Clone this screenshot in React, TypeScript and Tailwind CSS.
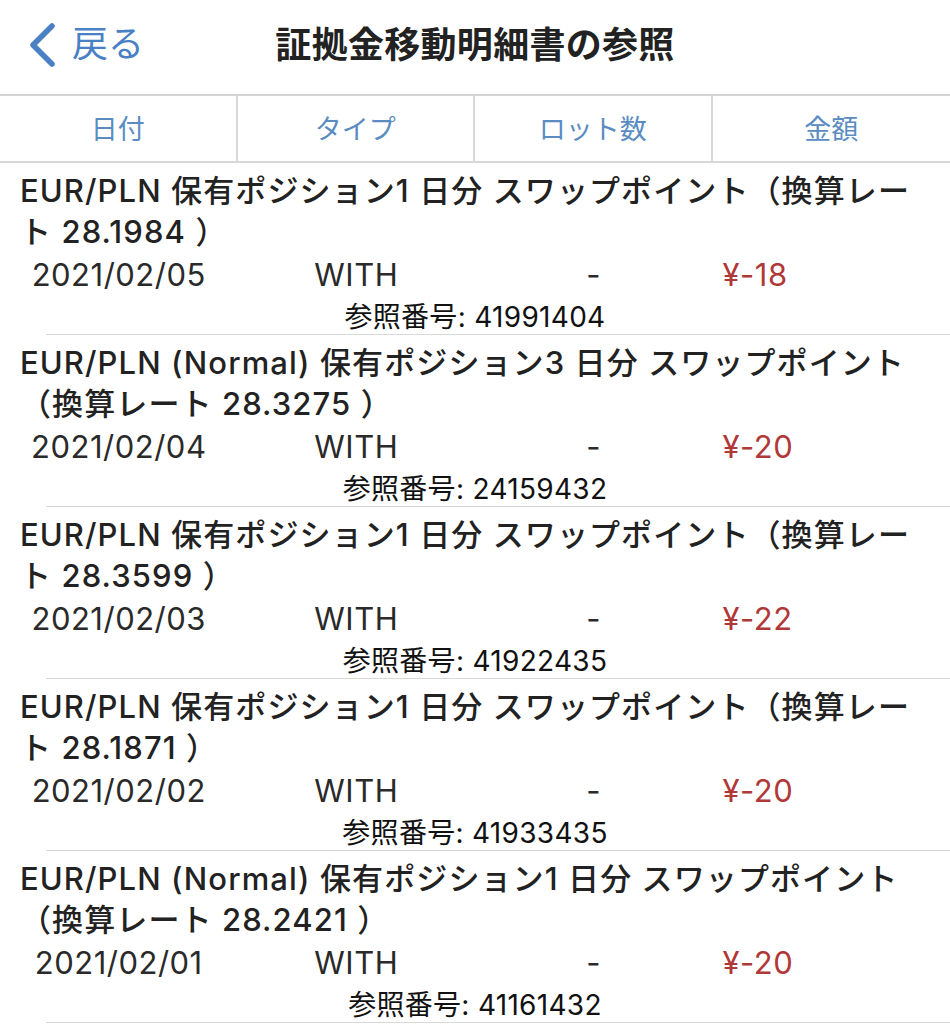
import React from "react";

const FONT = {
  fontFamily: '"Inter", "Noto Sans CJK JP", sans-serif',
};

type Row = { l1: string; l2: string; date: string; amt: string; ref: string };

const rows: Row[] = [
  {
    l1: "EUR/PLN 保有ポジション1 日分 スワップポイント（換算レー",
    l2: "ト 28.1984 ）",
    date: "2021/02/05",
    amt: "¥-18",
    ref: "41991404",
  },
  {
    l1: "EUR/PLN (Normal) 保有ポジション3 日分 スワップポイント",
    l2: "（換算レート 28.3275 ）",
    date: "2021/02/04",
    amt: "¥-20",
    ref: "24159432",
  },
  {
    l1: "EUR/PLN 保有ポジション1 日分 スワップポイント（換算レー",
    l2: "ト 28.3599 ）",
    date: "2021/02/03",
    amt: "¥-22",
    ref: "41922435",
  },
  {
    l1: "EUR/PLN 保有ポジション1 日分 スワップポイント（換算レー",
    l2: "ト 28.1871 ）",
    date: "2021/02/02",
    amt: "¥-20",
    ref: "41933435",
  },
  {
    l1: "EUR/PLN (Normal) 保有ポジション1 日分 スワップポイント",
    l2: "（換算レート 28.2421 ）",
    date: "2021/02/01",
    amt: "¥-20",
    ref: "41161432",
  },
];

export default function App() {
  return (
    <div
      className="w-[950px] h-[1024px] overflow-hidden bg-white"
      style={FONT}
    >
      {/* Nav bar */}
      <div className="relative h-[96px] flex items-center justify-center border-b-2 border-[#d4d4d4]">
        <div className="absolute left-[26px] top-[20px] flex items-center gap-[14px]">
          <svg width="32" height="48" viewBox="0 0 32 48">
            <path
              d="M26 6 L7 25 L26 44"
              fill="none"
              stroke="#4a80c4"
              strokeWidth="5.5"
              strokeLinecap="round"
              strokeLinejoin="round"
            />
          </svg>
          <span className="text-[36px] leading-[48px] text-[#4a80c4]">戻る</span>
        </div>
        <h1 className="text-[36px] font-bold text-[#222] tracking-[0.3px] -mt-[4px]">
          証拠金移動明細書の参照
        </h1>
      </div>

      {/* Table header */}
      <div className="grid grid-cols-4 h-[67px] border-b-2 border-[#d8d8d8]">
        {["日付", "タイプ", "ロット数", "金額"].map((h, i) => (
          <div
            key={h}
            className={`flex items-center justify-center pt-[4px] text-[27px] text-[#5a8cc2] ${
              i < 3 ? "border-r-2 border-[#d8d8d8]" : ""
            }`}
          >
            {h}
          </div>
        ))}
      </div>

      {/* Rows */}
      {rows.map((r, idx) => (
        <div key={idx}>
          <div className="pt-[7px] pl-[20px] text-[31px] leading-[41px] font-medium text-[#222] whitespace-nowrap tracking-[1.1px]">
            <div>{r.l1}</div>
            <div>{r.l2}</div>
          </div>
          <div className="grid grid-cols-4 h-[44px] items-center text-[31px] text-[#2a2a2a] tracking-[0.5px]">
            <div className="text-center">{r.date}</div>
            <div className="text-center">WITH</div>
            <div className="text-center">-</div>
            <div className="pl-[10px] text-[#b03838]">{r.amt}</div>
          </div>
          <div className="h-[38px] pt-[4px] text-center text-[28px] leading-[34px] text-[#111] tracking-[0.3px]">
            参照番号: {r.ref}
          </div>
          <div className="ml-[46px] h-[1px] bg-[#d8d8d8]" />
        </div>
      ))}
    </div>
  );
}
